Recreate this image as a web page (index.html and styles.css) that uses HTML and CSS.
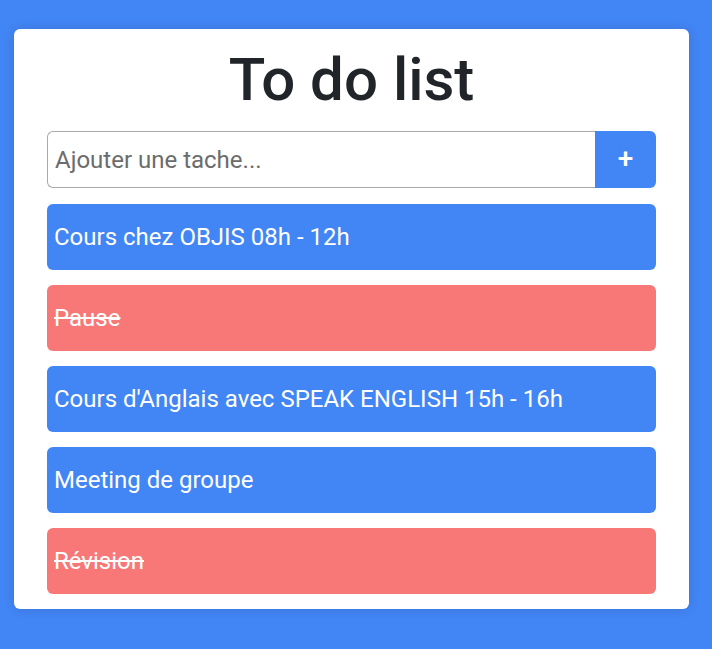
FILE: index.html
```html
<!DOCTYPE html>
<html lang="fr">
<head>
<meta charset="utf-8">
<title>To do list</title>
<link rel="stylesheet" href="styles.css">
</head>
<body>
<div class="card">
  <h1 class="title">To do list</h1>
  <form class="add-form">
    <input class="add-input" type="text" placeholder="Ajouter une tache...">
    <button class="add-btn" type="button">+</button>
  </form>
  <ul class="tasks">
    <li class="task">Cours chez OBJIS 08h - 12h</li>
    <li class="task done">Pause</li>
    <li class="task">Cours d'Anglais avec SPEAK ENGLISH 15h - 16h</li>
    <li class="task">Meeting de groupe</li>
    <li class="task done">Révision</li>
  </ul>
</div>
</body>
</html>
```
FILE: styles.css
```css
* { box-sizing: border-box; }
html, body { margin: 0; padding: 0; }
body {
  background: #4285f4;
  font-family: Roboto, "Noto Sans", sans-serif;
  min-height: 649px;
  padding: 29px 23px 0 14px;
}
.card {
  background: #fff;
  border-radius: 6px;
  padding: 16px 33px 15px;
  box-shadow: 0 0 12px rgba(0,0,0,0.12);
}
.title {
  margin: 0;
  text-align: center;
  font-weight: 500;
  font-size: 60px;
  line-height: 70px;
  color: #212529;
}
.add-form {
  display: flex;
  margin-top: 16px;
  height: 57px;
}
.add-input {
  flex: 1;
  min-width: 0;
  border: 1px solid #aaa;
  border-right: none;
  border-radius: 6px 0 0 6px;
  padding: 0 7px;
  font-family: inherit;
  font-size: 24px;
  color: #212529;
  outline: none;
}
.add-input::placeholder { color: #6c6c6c; }
.add-btn {
  width: 61px;
  border: none;
  background: #4285f4;
  color: #fff;
  font-family: inherit;
  font-size: 28px;
  font-weight: 500;
  border-radius: 0 6px 6px 0;
  padding: 0 0 3px;
}
.tasks {
  list-style: none;
  margin: 16px 0 0;
  padding: 0;
  display: flex;
  flex-direction: column;
  gap: 15px;
}
.task {
  height: 66px;
  display: flex;
  align-items: center;
  padding: 0 7px;
  border-radius: 6px;
  background: #4285f4;
  color: #fff;
  font-size: 24px;
}
.task.done {
  background: #f77876;
  text-decoration: line-through;
}
```
